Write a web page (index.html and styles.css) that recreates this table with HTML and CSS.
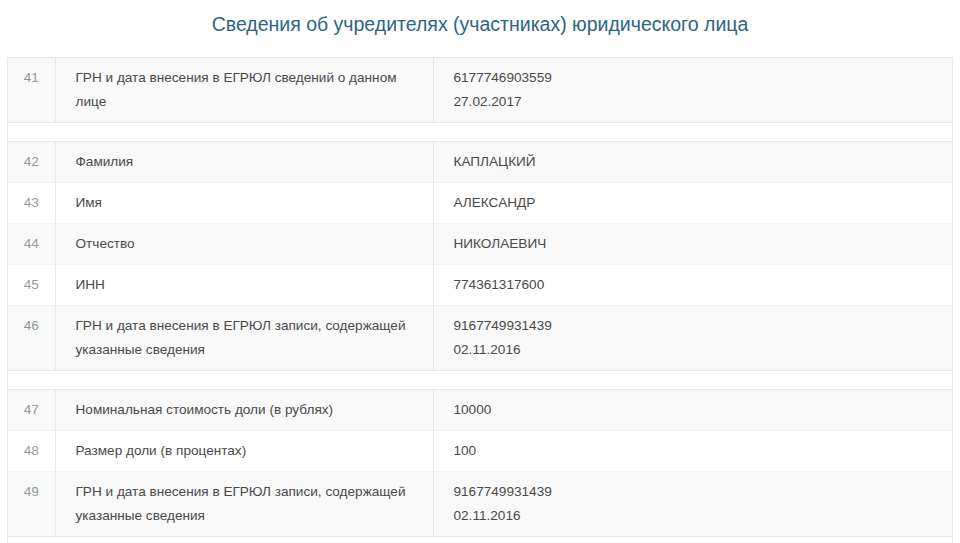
FILE: index.html
```html
<!doctype html>
<html lang="ru">
<head>
    <meta charset="UTF-8">
    <title>Сведения об учредителях</title>
    <link rel="stylesheet" href="styles.css">
</head>
<body>
    <h1 class="title">Сведения об учредителях (участниках) юридического лица</h1>
    <div class="sheet">
        <table class="grp">
            <tr>
                <td class="num">41</td>
                <td class="lbl">ГРН и дата внесения в ЕГРЮЛ сведений о данном лице</td>
                <td class="val">6177746903559<br>27.02.2017</td>
            </tr>
        </table>
        <table class="grp">
            <tr>
                <td class="num">42</td>
                <td class="lbl">Фамилия</td>
                <td class="val">КАПЛАЦКИЙ</td>
            </tr>
            <tr>
                <td class="num">43</td>
                <td class="lbl">Имя</td>
                <td class="val">АЛЕКСАНДР</td>
            </tr>
            <tr>
                <td class="num">44</td>
                <td class="lbl">Отчество</td>
                <td class="val">НИКОЛАЕВИЧ</td>
            </tr>
            <tr>
                <td class="num">45</td>
                <td class="lbl">ИНН</td>
                <td class="val">774361317600</td>
            </tr>
            <tr>
                <td class="num">46</td>
                <td class="lbl">ГРН и дата внесения в ЕГРЮЛ записи, содержащей указанные сведения</td>
                <td class="val">9167749931439<br>02.11.2016</td>
            </tr>
        </table>
        <table class="grp">
            <tr>
                <td class="num">47</td>
                <td class="lbl">Номинальная стоимость доли (в рублях)</td>
                <td class="val">10000</td>
            </tr>
            <tr>
                <td class="num">48</td>
                <td class="lbl">Размер доли (в процентах)</td>
                <td class="val">100</td>
            </tr>
            <tr>
                <td class="num">49</td>
                <td class="lbl">ГРН и дата внесения в ЕГРЮЛ записи, содержащей указанные сведения</td>
                <td class="val">9167749931439<br>02.11.2016</td>
            </tr>
        </table>
    </div>
</body>
</html>
```
FILE: styles.css
```css
*{
    margin:0;
    padding:0;
    box-sizing: border-box;
}
body{
    font-family: "Liberation Sans", Arial, sans-serif;
    font-size: 13.6px;
    color:#4a4a4a;
    background-color: #fff;
}
.title{
    font-size: 19.5px;
    font-weight: normal;
    line-height: 24px;
    color:#2b6584;
    text-align: center;
    padding-top: 12px;
    margin-bottom: 21px;
}
.sheet{
    margin:0 7px;
    border-left:1px solid #e9e9e9;
    border-right:1px solid #e9e9e9;
    height: 486px;
}
.grp{
    width:100%;
    border-collapse: collapse;
    border-top:1px solid #e6e6e6;
    border-bottom:1px solid #e6e6e6;
    margin-bottom: 18px;
    table-layout: fixed;
}
.grp tr{
    border-top:1px solid #f3f3f3;
}
.grp tr:first-child{
    border-top:none;
}
.grp tr:nth-child(odd){
    background-color: #f9f9f9;
}
.grp td{
    padding:8px 12px 8px 20px;
    line-height: 24px;
    vertical-align: top;
    border-left:1px solid #e8e8e8;
}
.grp td:first-child{
    border-left:none;
}
.num{
    width:47px;
    text-align: center;
    color:#8d9ca4;
    padding-left:0 !important;
    padding-right:0 !important;
}
.lbl{
    width:378px;
}
```
